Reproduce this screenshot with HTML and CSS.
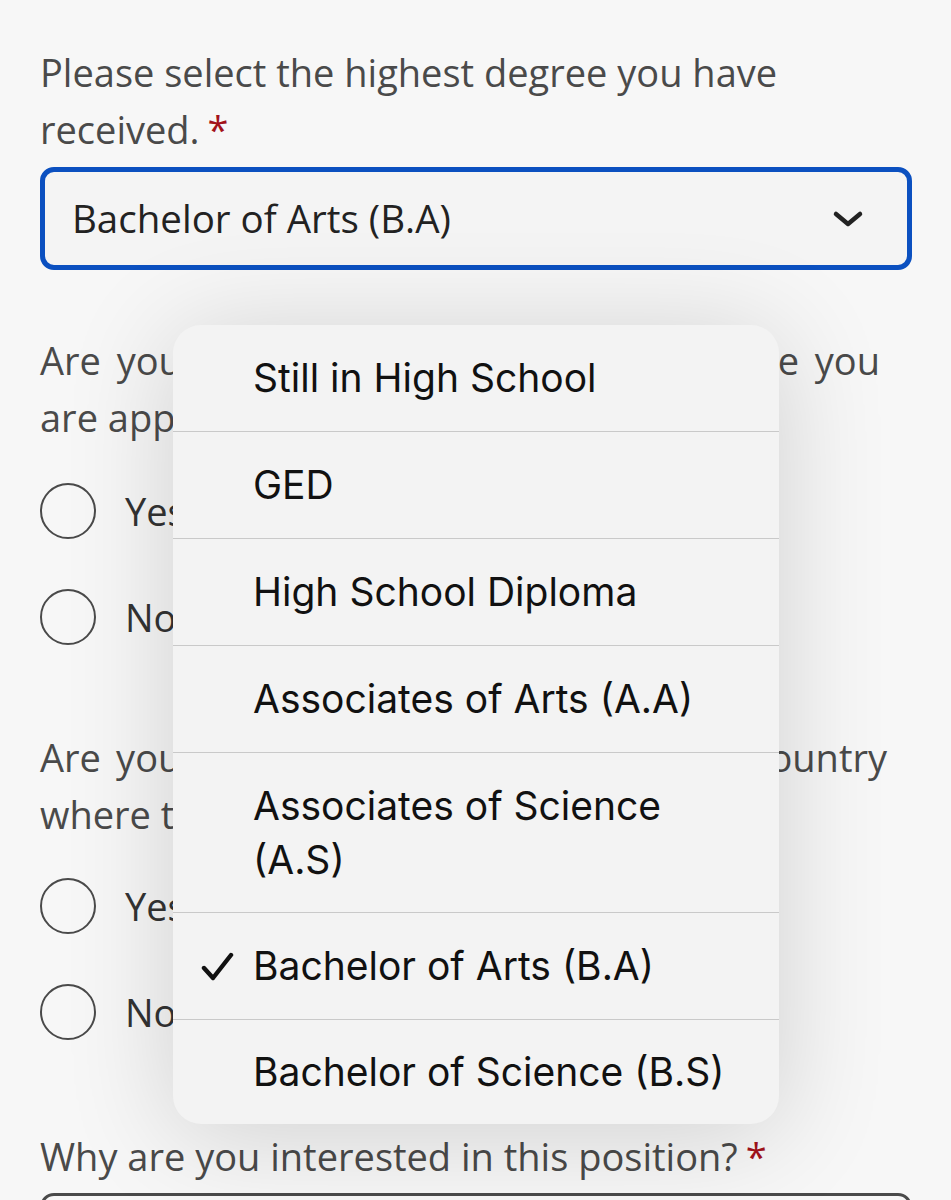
FILE: index.html
```html
<!DOCTYPE html>
<html>
<head>
<meta charset="utf-8">
<link rel="stylesheet" href="styles.css">
</head>
<body>
<div class="page">
  <form class="form">
    <div class="field">
      <label class="label">Please select the highest degree you have<br>received.<span class="req">*</span></label>
      <div class="select">
        <span class="select-value">Bachelor of Arts (B.A)</span>
        <svg class="chev" width="32" height="20" viewBox="0 0 32 20"><path d="M4 5 L16 15 L28 5" fill="none" stroke="#222" stroke-width="4.5" stroke-linecap="round" stroke-linejoin="round"/></svg>
      </div>
    </div>

    <div class="field q2">
      <p class="label">
        <span class="line just w2">Are you at least 18 years old in the state you</span>
        <span class="line">are applying for?</span>
      </p>
      <div class="radios">
        <div class="radio"><span class="circle"></span><span class="rlabel">Yes</span></div>
        <div class="radio"><span class="circle"></span><span class="rlabel">No</span></div>
      </div>
    </div>

    <div class="field q3">
      <p class="label">
        <span class="line just w3">Are you legally allowed to work in the country</span>
        <span class="line">where the position is located?</span>
      </p>
      <div class="radios">
        <div class="radio"><span class="circle"></span><span class="rlabel">Yes</span></div>
        <div class="radio"><span class="circle"></span><span class="rlabel">No</span></div>
      </div>
    </div>

    <div class="field q4">
      <p class="label">Why are you interested in this position?<span class="req">*</span></p>
      <div class="textarea"></div>
    </div>
  </form>

  <div class="menu">
    <div class="item">Still in High School</div>
    <div class="item">GED</div>
    <div class="item">High School Diploma</div>
    <div class="item">Associates of Arts (A.A)</div>
    <div class="item tall">Associates of Science<br>(A.S)</div>
    <div class="item checked"><svg class="check" width="34" height="32" viewBox="0 0 34 32"><path d="M3 17 L12 27 L30 4" fill="none" stroke="#111" stroke-width="4.4" stroke-linecap="round" stroke-linejoin="round"/></svg>Bachelor of Arts (B.A)</div>
    <div class="item last">Bachelor of Science (B.S)</div>
  </div>
</div>
</body>
</html>
```
FILE: styles.css
```css
html, body {
  margin: 0;
  padding: 0;
  background: #f7f7f7;
}
.page {
  position: relative;
  width: 951px;
  height: 1200px;
  overflow: hidden;
}
.form {
  padding: 44px 39px 0 40px;
  font-family: "Open Sans", sans-serif;
}
.label {
  display: block;
  margin: 0;
  font-size: 38px;
  line-height: 57px;
  color: #4a4a4a;
}
.line {
  display: block;
  white-space: nowrap;
}
.line.just {
  text-align: justify;
  text-align-last: justify;
}
.w2 {
  width: 840px;
}
.w3 {
  width: 847px;
}
.req {
  color: #a3131b;
  margin-left: 8px;
}
.select {
  margin-top: 9px;
  height: 93px;
  border: 5px solid #0b50c0;
  border-radius: 14px;
  display: flex;
  align-items: center;
  justify-content: space-between;
  padding: 0 43px 0 27px;
  background: #f4f4f4;
}
.select-value {
  font-size: 38.5px;
  color: #222;
  margin-top: -2px;
}
.chev {
  display: block;
}
.q2 {
  margin-top: 62px;
}
.radios {
  margin-top: 37px;
  display: flex;
  flex-direction: column;
  gap: 50px;
}
.q3 .radios {
  margin-top: 35px;
}
.radio {
  display: flex;
  align-items: center;
  gap: 29px;
}
.circle {
  width: 52px;
  height: 52px;
  border: 2px solid #4a4a4a;
  border-radius: 50%;
}
.rlabel {
  font-size: 38px;
  color: #333;
}
.q3 {
  margin-top: 84px;
}
.q4 {
  margin-top: 88px;
}
.textarea {
  margin-top: 8px;
  height: 120px;
  border: 3px solid #4a4a4a;
  border-radius: 14px;
}
.menu {
  position: absolute;
  left: 173px;
  top: 325px;
  width: 606px;
  background: #f3f3f3;
  border-radius: 28px;
  box-shadow: 0 10px 110px rgba(0, 0, 0, 0.16);
  font-family: Inter, "Liberation Sans", sans-serif;
  font-size: 39px;
  color: #111;
  overflow: hidden;
}
.item {
  position: relative;
  display: flex;
  align-items: center;
  min-height: 107px;
  padding: 0 20px 0 80px;
  box-sizing: border-box;
  border-bottom: 1px solid #c9c9c9;
  line-height: 54px;
}
.item.tall {
  min-height: 160px;
}
.item.last {
  border-bottom: none;
  min-height: 104px;
}
.check {
  position: absolute;
  left: 28px;
  top: 38px;
}
```
